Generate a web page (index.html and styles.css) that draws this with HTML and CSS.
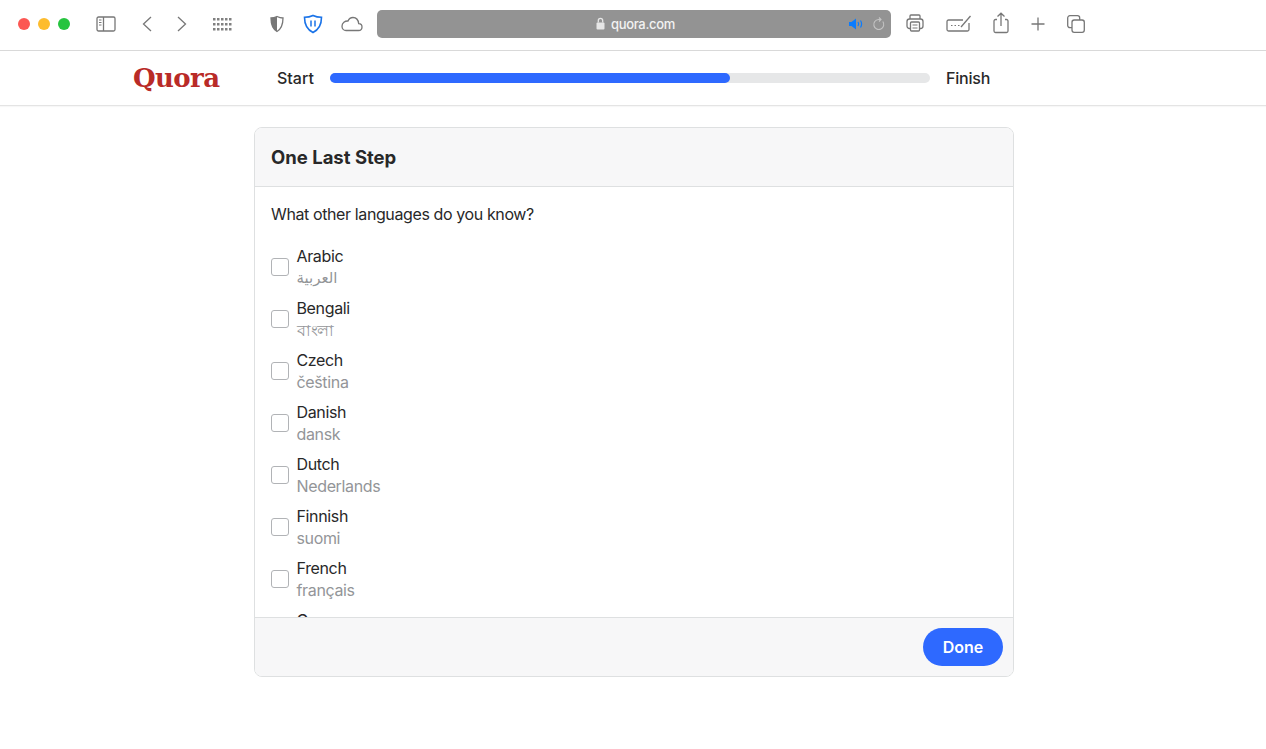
FILE: index.html
```html
<!DOCTYPE html>
<html lang="en">
<head>
    <meta charset="UTF-8">
    <meta name="viewport" content="width=device-width, initial-scale=1.0">
    <title>Quora</title>
    <link rel="stylesheet" href="styles.css">
</head>
<body>
    <div class="toolbar">
        <div class="lights">
            <span class="light red"></span>
            <span class="light yellow"></span>
            <span class="light green"></span>
        </div>
        <svg class="ic ic-sidebar" width="20" height="16" viewBox="0 0 20 16"><rect x="1" y="1" width="18" height="14" rx="1.5"/><path d="M7.5 1v14"/><path class="thin" d="M3 4h2.500M3 6.500h2.500M3 9h2.500"/></svg>
        <svg class="ic ic-back" width="14" height="16" viewBox="0 0 14 16"><path d="M11 1 3.500 8l7.500 7"/></svg>
        <svg class="ic ic-forward" width="14" height="16" viewBox="0 0 14 16"><path d="m3 1 7.500 7L3 15"/></svg>
        <svg class="ic ic-grid" width="20" height="14" viewBox="0 0 20 14"><g class="dots"><rect x="1" y="1" width="2.500" height="2.500"/><rect x="5" y="1" width="2.500" height="2.500"/><rect x="9" y="1" width="2.500" height="2.500"/><rect x="13" y="1" width="2.500" height="2.500"/><rect x="17" y="1" width="2.500" height="2.500"/><rect x="1" y="6" width="2.500" height="2.500"/><rect x="5" y="6" width="2.500" height="2.500"/><rect x="9" y="6" width="2.500" height="2.500"/><rect x="13" y="6" width="2.500" height="2.500"/><rect x="17" y="6" width="2.500" height="2.500"/><rect x="1" y="11" width="2.500" height="2.500"/><rect x="5" y="11" width="2.500" height="2.500"/><rect x="9" y="11" width="2.500" height="2.500"/><rect x="13" y="11" width="2.500" height="2.500"/><rect x="17" y="11" width="2.500" height="2.500"/></g></svg>
        <svg class="ic ic-shield" width="18" height="18" viewBox="0 0 18 18"><path class="half" d="M9 1.500c-2 1-4 1.500-6 1.500 0 6 1 10.500 6 13.500z"/><path d="M9 1.500c2 1 4 1.500 6 1.500 0 6-1 10.500-6 13.500C4 13.500 3 9 3 3c2 0 4-.5 6-1.500z"/></svg>
        <svg class="ic ic-warden" width="20" height="20" viewBox="0 0 20 20"><path d="M10 1.500c2.500 1.200 5.500 1.800 8.500 1.800 0 7-1.800 12-8.500 15.200C3.300 15.300 1.500 10.300 1.500 3.300c3 0 6-.6 8.500-1.800z"/><path class="pause" d="M8 6.500v6M12 6.500v6"/></svg>
        <svg class="ic ic-cloud" width="22" height="16" viewBox="0 0 22 16"><path d="M5 14.500h12.500c2 0 3.500-1.500 3.500-3.500s-1.500-3.300-3.300-3.300C17.300 4 15 1.500 12 1.500 9.500 1.500 7.800 3 7 5 4 4.800 1 7 1 10.200c0 2.500 1.800 4.300 4 4.300z"/></svg>
        <div class="url-bar">
            <div class="url-text">
                <svg class="lock" width="9" height="13" viewBox="0 0 9 13"><rect x=".5" y="5.500" width="8" height="7" rx="1"/><path d="M2.300 5.500V3.500a2.200 2.200 0 0 1 4.400 0v2"/></svg>
                <span>quora.com</span>
            </div>
            <div class="url-right">
                <svg class="sound" width="15" height="12" viewBox="0 0 15 12"><path class="cone" d="M0 4h2.500L7 .5v11L2.500 8H0z"/><path d="M9 4c.8 1.200.8 2.800 0 4M11.500 2.500c1.400 2.200 1.400 4.800 0 7"/></svg>
                <svg class="reload" width="13" height="14" viewBox="0 0 13 14"><path d="M10.800 4.500A5 5 0 1 1 6.500 2.500H9"/><path d="M7 .5 9 2.500 7 4.500"/></svg>
            </div>
        </div>
        <svg class="ic ic-print" width="18" height="18" viewBox="0 0 18 18"><path d="M4 5V2c0-.6.5-1 1-1h8c.6 0 1 .4 1 1v3"/><rect x="1" y="5" width="16" height="9.500" rx="2.500"/><rect class="paper" x="4.500" y="8" width="9" height="9" rx="1"/><path class="thin" d="M6.500 11h5M6.500 14h5"/></svg>
        <svg class="ic ic-keys" width="26" height="18" viewBox="0 0 26 18"><path d="M17 6H2.500C1.700 6 1 6.700 1 7.500v8c0 .8.700 1.500 1.500 1.500h19c.8 0 1.500-.7 1.500-1.500V9"/><path d="M15 13 24.500 2"/><path class="thin" d="M5 11.500h1.500M8.500 11.500H10M12 11.500h1.500"/></svg>
        <svg class="ic ic-share" width="20" height="22" viewBox="0 0 20 22"><path d="M6 7.500H4.500C3.700 7.500 3 8.200 3 9v10c0 .8.700 1.500 1.500 1.500h11c.8 0 1.500-.7 1.500-1.500V9c0-.8-.7-1.500-1.500-1.500H14"/><path d="M10 14V1.500M6.500 4.500 10 1.200l3.500 3.300"/></svg>
        <svg class="ic ic-plus" width="18" height="18" viewBox="0 0 18 18"><path d="M9 2.500v13M2.500 9h13"/></svg>
        <svg class="ic ic-tabs" width="18" height="18" viewBox="0 0 18 18"><rect x=".7" y=".7" width="12" height="12" rx="2.200"/><rect class="front" x="5" y="5" width="12.300" height="12.300" rx="2.200"/></svg>
    </div>

    <header class="progress-header">
        <div class="logo">Quora</div>
        <div class="step-label">Start</div>
        <div class="progress-track">
            <div class="progress-fill"></div>
        </div>
        <div class="step-label finish">Finish</div>
    </header>

    <main class="card">
        <div class="card-head">One Last Step</div>
        <div class="card-body">
            <p class="question">What other languages do you know?</p>
            <div class="lang-list">
                <label class="lang"><span class="box"></span><span class="lang-text"><span class="name">Arabic</span><span class="native arabic" dir="rtl">العربية</span></span></label>
                <label class="lang"><span class="box"></span><span class="lang-text"><span class="name">Bengali</span><span class="native bengali" lang="bn">বাংলা</span></span></label>
                <label class="lang"><span class="box"></span><span class="lang-text"><span class="name">Czech</span><span class="native">čeština</span></span></label>
                <label class="lang"><span class="box"></span><span class="lang-text"><span class="name">Danish</span><span class="native">dansk</span></span></label>
                <label class="lang"><span class="box"></span><span class="lang-text"><span class="name">Dutch</span><span class="native">Nederlands</span></span></label>
                <label class="lang"><span class="box"></span><span class="lang-text"><span class="name">Finnish</span><span class="native">suomi</span></span></label>
                <label class="lang"><span class="box"></span><span class="lang-text"><span class="name">French</span><span class="native">français</span></span></label>
                <label class="lang"><span class="box"></span><span class="lang-text"><span class="name">German</span><span class="native">Deutsch</span></span></label>
            </div>
        </div>
        <div class="card-foot">
            <button class="done">Done</button>
        </div>
    </main>
</body>
</html>
```

FILE: styles.css
```css
* {
    box-sizing: border-box;
}
body {
    margin: 0;
    height: 749px;
    overflow: hidden;
    background-color: #fff;
    color: #282829;
    font-family: Inter, "Noto Sans", "DejaVu Sans", sans-serif;
    font-size: 16px;
}

/* browser toolbar */
.toolbar {
    display: flex;
    align-items: center;
    height: 51px;
    padding: 0 0 3px 18px;
    border-bottom: 1px solid #d9d9d9;
}
.lights {
    display: flex;
    gap: 8px;
}
.light {
    width: 12px;
    height: 12px;
    border-radius: 50%;
}
.red { background-color: #fc5753; }
.yellow { background-color: #fdbc2e; }
.green { background-color: #26c43f; }

.ic {
    flex: none;
    fill: none;
    stroke: #777;
    stroke-width: 1.3;
}
.ic .thin { stroke-width: 1; }
.ic .dots { fill: #808080; stroke: none; }
.ic .half { fill: #777; stroke: none; }
.ic-sidebar { margin-left: 26px; }
.ic-back { margin-left: 24px; }
.ic-forward { margin-left: 21px; }
.ic-grid { margin-left: 23px; }
.ic-shield { margin-left: 36px; }
.ic-warden { margin-left: 17px; stroke: #1a73e8; stroke-width: 1.6; }
.ic-warden .pause { stroke-width: 1.5; }
.ic-cloud { margin-left: 18px; }
.ic-print { margin-left: 15px; margin-top: -1px; }
.ic-print .paper { fill: #fff; }
.ic-keys { margin-left: 22px; margin-top: -1px; }
.ic-share { margin-left: 19px; margin-top: -1px; }
.ic-plus { margin-left: 18px; }
.ic-tabs { margin-left: 20px; }
.ic-tabs .front { fill: #fff; }

.url-bar {
    position: relative;
    flex: none;
    display: flex;
    align-items: center;
    justify-content: center;
    width: 514px;
    height: 28px;
    margin-left: 14px;
    padding-left: 3px;
    background-color: #939393;
    border-radius: 5px;
}
.url-text {
    display: flex;
    align-items: center;
    gap: 6px;
    color: #f2f2f2;
    font-size: 13px;
    font-weight: 500;
    letter-spacing: -0.3px;
}
.lock { fill: #e6e6e6; }
.lock path { fill: none; stroke: #e6e6e6; stroke-width: 1.3; }
.url-right {
    position: absolute;
    top: 7px;
    right: 6px;
    display: flex;
    align-items: center;
    gap: 8px;
}
.sound { fill: none; stroke: #0a7cff; stroke-width: 1.2; }
.sound .cone { fill: #0a7cff; stroke: none; }
.reload { fill: none; stroke: #c4c4c4; stroke-width: 1.1; }

/* progress header */
.progress-header {
    display: grid;
    grid-template-columns: 144px 53px 600px auto;
    align-items: center;
    height: 55px;
    padding-left: 133px;
    border-bottom: 1px solid #e4e4e4;
    box-shadow: 0 1px 1px rgba(0,0,0,0.03);
}
.logo {
    color: #b92b27;
    font-family: "DejaVu Serif", serif;
    font-size: 26px;
    font-weight: bold;
    line-height: 1;
    letter-spacing: -0.6px;
}
.step-label {
    font-weight: 500;
}
.finish {
    padding-left: 16px;
    letter-spacing: -0.2px;
}
.progress-track {
    height: 10px;
    background-color: #e6e7e8;
    border-radius: 5px;
}
.progress-fill {
    width: 400px;
    height: 10px;
    background-color: #2e69ff;
    border-radius: 5px;
}

/* card */
.card {
    display: flex;
    flex-direction: column;
    width: 760px;
    height: 550px;
    margin: 21px 0 0 254px;
    border: 1px solid #dee0e1;
    border-radius: 8px;
    overflow: hidden;
}
.card-head {
    flex: none;
    height: 59px;
    padding: 0 16px;
    background-color: #f7f7f8;
    border-bottom: 1px solid #dee0e1;
    font-size: 18.5px;
    font-weight: 700;
    line-height: 58px;
}
.card-body {
    flex: 1;
    padding: 16px;
    overflow: hidden;
}
.question {
    margin: 0 0 20px;
    line-height: 22px;
    letter-spacing: -0.39px;
}
.lang-list {
    display: flex;
    flex-direction: column;
    gap: 8px;
}
.lang {
    display: flex;
    align-items: center;
    gap: 7.5px;
}
.box {
    flex: none;
    width: 18px;
    height: 18px;
    margin-top: -1px;
    background-color: #fff;
    border: 1px solid #b1b3b6;
    border-radius: 3px;
}
.lang-text {
    display: flex;
    flex-direction: column;
    align-items: flex-start;
    line-height: 22px;
    letter-spacing: -0.35px;
}
.native {
    color: #939598;
}
.arabic {
    font-size: 15px;
    letter-spacing: 0;
}
.bengali {
    margin-bottom: -1px;
    padding-top: 1px;
    font-size: 15.5px;
    letter-spacing: -0.3px;
}
.card-foot {
    flex: none;
    display: flex;
    align-items: center;
    justify-content: flex-end;
    height: 59px;
    padding: 0 10px;
    background-color: #f7f7f8;
    border-top: 1px solid #dee0e1;
}
.done {
    width: 80px;
    height: 38px;
    background-color: #2e69ff;
    border: 0;
    border-radius: 19px;
    color: #fff;
    font-family: inherit;
    font-size: 16px;
    font-weight: 600;
}
```
